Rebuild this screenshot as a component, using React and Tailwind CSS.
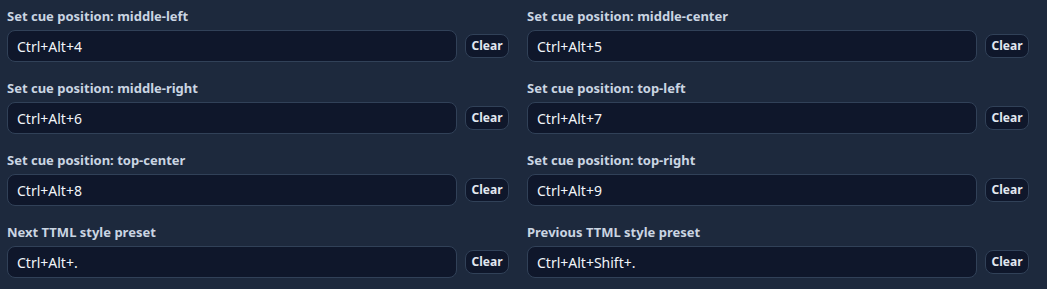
const shortcuts = [
  { label: 'Set cue position: middle-left', value: 'Ctrl+Alt+4' },
  { label: 'Set cue position: middle-center', value: 'Ctrl+Alt+5' },
  { label: 'Set cue position: middle-right', value: 'Ctrl+Alt+6' },
  { label: 'Set cue position: top-left', value: 'Ctrl+Alt+7' },
  { label: 'Set cue position: top-center', value: 'Ctrl+Alt+8' },
  { label: 'Set cue position: top-right', value: 'Ctrl+Alt+9' },
  { label: 'Next TTML style preset', value: 'Ctrl+Alt+.' },
  { label: 'Previous TTML style preset', value: 'Ctrl+Alt+Shift+.' },
];

const ShortcutField = ({ label, value }) => (
  <div className="flex flex-col">
    <label className="text-[13px] leading-[18px] font-bold text-slate-300 mb-[5px]">{label}</label>
    <div className="flex items-center gap-2">
      <input
        readOnly
        value={value}
        className="flex-1 min-w-0 h-8 px-[9px] rounded-lg bg-slate-900 border border-slate-700 text-[14px] text-slate-100 outline-none"
      />
      <button className="h-6 w-11 shrink-0 rounded-lg bg-slate-900 border border-slate-700 text-[12px] font-bold text-slate-200">
        Clear
      </button>
    </div>
  </div>
);

export default function App() {
  return (
    <div
      className="w-full h-[289px] bg-slate-800 pl-[7px] pr-[18px] pt-[7px]"
      style={{ fontFamily: '"Noto Sans", "Open Sans", sans-serif' }}
    >
      <div className="grid grid-cols-2 gap-x-[18px] gap-y-[17px]">
        {shortcuts.map((s) => (
          <ShortcutField key={s.label} label={s.label} value={s.value} />
        ))}
      </div>
    </div>
  );
}
